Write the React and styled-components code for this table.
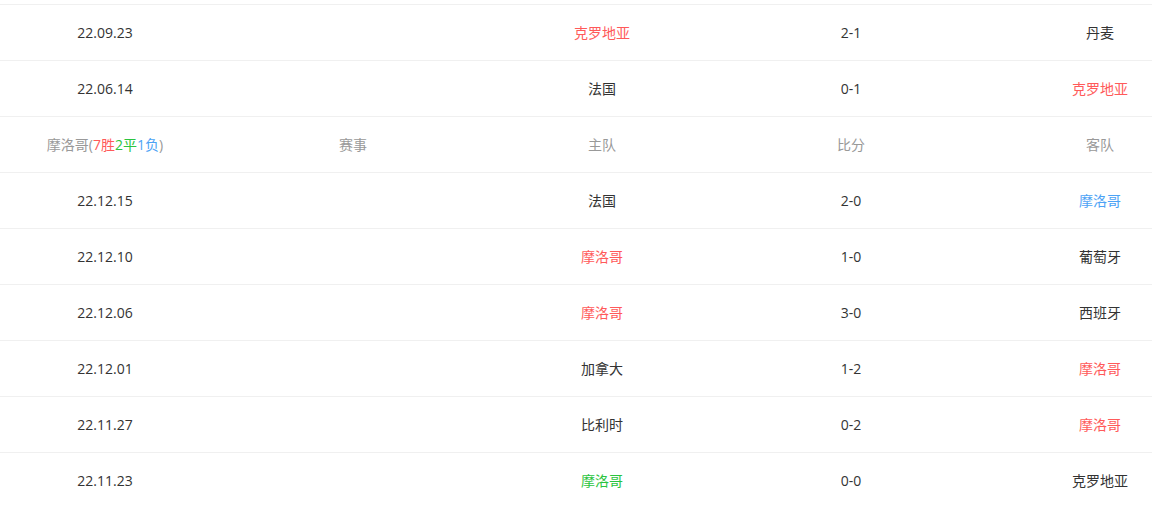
import styled, { createGlobalStyle } from "styled-components";

const GlobalStyle = createGlobalStyle`
  body {
    margin: 0;
    background-color: #FFFFFF;
    overflow: hidden;
    font-family: "Open Sans", "Noto Sans CJK SC", sans-serif;
  }
`;

const colors = {
  red: "#FF5A5A",
  green: "#2BC440",
  blue: "#4DA3F5",
  dark: "#333333",
  gray: "#999999",
};

const firstGroup = [
  { date: "22.09.23", home: "克罗地亚", homeColor: "red", score: "2-1", away: "丹麦", awayColor: "dark" },
  { date: "22.06.14", home: "法国", homeColor: "dark", score: "0-1", away: "克罗地亚", awayColor: "red" },
];

const secondGroup = [
  { date: "22.12.15", home: "法国", homeColor: "dark", score: "2-0", away: "摩洛哥", awayColor: "blue" },
  { date: "22.12.10", home: "摩洛哥", homeColor: "red", score: "1-0", away: "葡萄牙", awayColor: "dark" },
  { date: "22.12.06", home: "摩洛哥", homeColor: "red", score: "3-0", away: "西班牙", awayColor: "dark" },
  { date: "22.12.01", home: "加拿大", homeColor: "dark", score: "1-2", away: "摩洛哥", awayColor: "red" },
  { date: "22.11.27", home: "比利时", homeColor: "dark", score: "0-2", away: "摩洛哥", awayColor: "red" },
  { date: "22.11.23", home: "摩洛哥", homeColor: "green", score: "0-0", away: "克罗地亚", awayColor: "dark" },
];

function MatchRow({ m }) {
  return (
    <Row>
      <Cell>{m.date}</Cell>
      <Cell></Cell>
      <Cell $color={colors[m.homeColor]}>{m.home}</Cell>
      <Cell>{m.score}</Cell>
      <Cell $color={colors[m.awayColor]}>{m.away}</Cell>
    </Row>
  );
}

export default function App() {
  return (
    <Page>
      <GlobalStyle />
      <Table>
        {firstGroup.map((m) => <MatchRow key={m.date} m={m} />)}
        <Row>
          <HeadCell>
            摩洛哥(<Mark $color={colors.red}>7胜</Mark>
            <Mark $color={colors.green}>2平</Mark>
            <Mark $color={colors.blue}>1负</Mark>)
          </HeadCell>
          <HeadCell>赛事</HeadCell>
          <HeadCell>主队</HeadCell>
          <HeadCell>比分</HeadCell>
          <HeadCell>客队</HeadCell>
        </Row>
        {secondGroup.map((m) => <MatchRow key={m.date} m={m} />)}
      </Table>
    </Page>
  );
}

const Page = styled.div`
  width: 100%;
  overflow: hidden;
  padding-top: 4px;
`;

const Table = styled.div`
  width: 1206px;
`;

const Row = styled.div`
  display: grid;
  grid-template-columns: 210px 286px 212px 286px 212px;
  height: 56px;
  box-sizing: border-box;
  border-top: 1px solid #F0F0F0;
  align-items: center;
`;

const Cell = styled.div`
  text-align: center;
  font-size: 14px;
  line-height: 20px;
  color: ${(p) => p.$color || colors.dark};
`;

const HeadCell = styled(Cell)`
  color: ${colors.gray};
`;

const Mark = styled.span`
  color: ${(p) => p.$color};
`;
